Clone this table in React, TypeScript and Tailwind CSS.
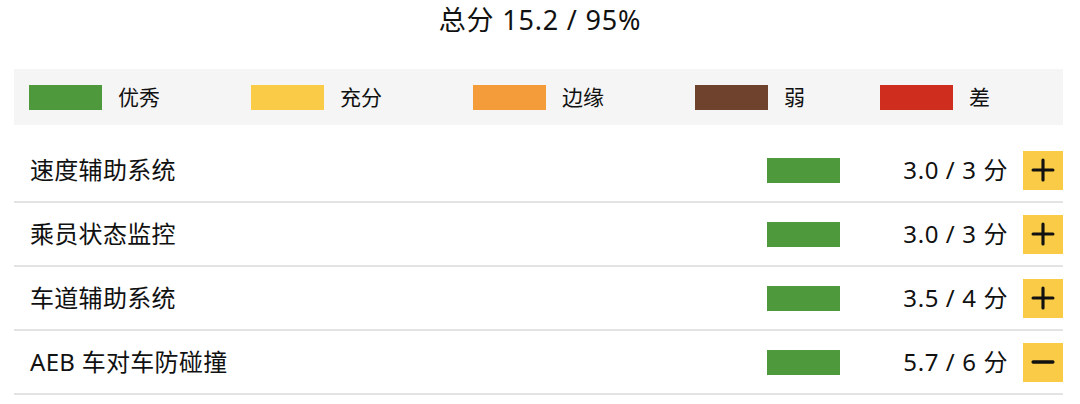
import { Plus, Minus } from 'lucide-react';

const legend = [
  { label: '优秀', color: 'bg-[#4d993b]', w: 'w-[222px]' },
  { label: '充分', color: 'bg-[#f9cb47]', w: 'w-[222px]' },
  { label: '边缘', color: 'bg-[#f49b3a]', w: 'w-[222px]' },
  { label: '弱', color: 'bg-[#6f422d]', w: 'w-[185px]' },
  { label: '差', color: 'bg-[#cf2e1f]', w: 'w-auto' },
];

const rows = [
  { name: '速度辅助系统', score: '3.0 / 3 分', open: false },
  { name: '乘员状态监控', score: '3.0 / 3 分', open: false },
  { name: '车道辅助系统', score: '3.5 / 4 分', open: false },
  { name: 'AEB 车对车防碰撞', score: '5.7 / 6 分', open: true },
];

export default function App() {
  return (
    <div
      className="w-[1080px] h-[404px] bg-white text-[#111] overflow-hidden"
      style={{ fontFamily: "'Noto Sans', 'Noto Sans CJK SC', sans-serif" }}
    >
      <div className="h-[40px] flex items-center justify-center text-[27px] tracking-[0.8px]">
        总分 15.2 / 95%
      </div>

      <div className="mx-[14px] w-[1049px]">
        <div className="mt-[29px] h-[56px] bg-[#f5f5f5] flex items-center pl-[15px]">
          {legend.map(l => (
            <div key={l.label} className={`${l.w} flex items-center`}>
              <div className={`w-[73px] h-[25px] ${l.color}`} />
              <span className="ml-[16px] text-[21px] leading-none">{l.label}</span>
            </div>
          ))}
        </div>

        <div className="mt-[14px]">
          {rows.map(r => (
            <div key={r.name} className="h-[64px] border-b-2 border-[#e3e3e3] flex items-center pl-[16px]">
              <div className="flex-1 text-[24px] tracking-[0.3px]">{r.name}</div>
              <div className="w-[73px] h-[25px] bg-[#4d993b]" />
              <div className="w-[168px] text-right text-[24px] tracking-[0.6px]">{r.score}</div>
              <button className="ml-[15px] w-[40px] h-[39px] bg-[#f9cb47] flex items-center justify-center">
                {r.open ? (
                  <Minus size={34} strokeWidth={2.3} color="#111" />
                ) : (
                  <Plus size={34} strokeWidth={2.2} color="#111" />
                )}
              </button>
            </div>
          ))}
        </div>
      </div>
    </div>
  );
}
